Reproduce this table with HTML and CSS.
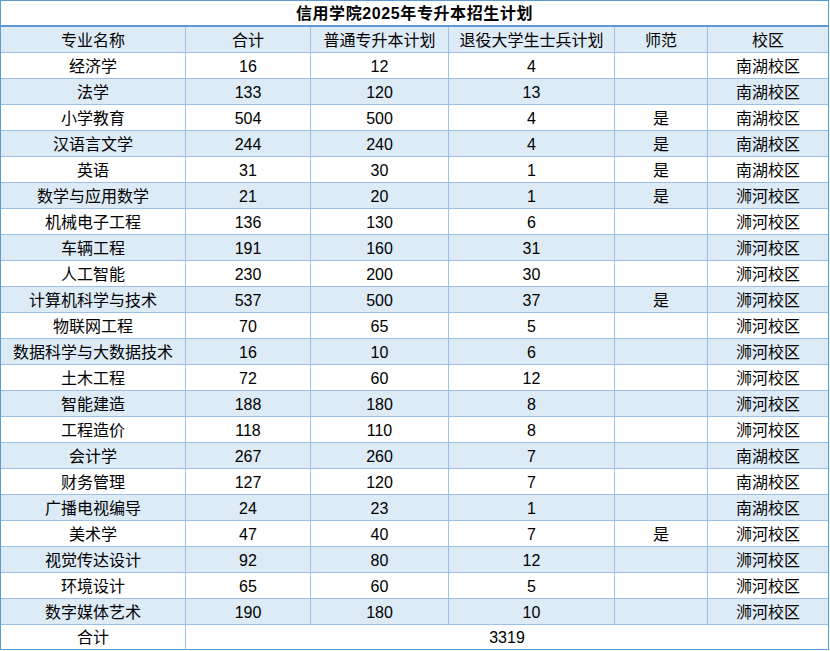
FILE: index.html
```html
<!DOCTYPE html>
<html lang="zh-CN">
<head>
<meta charset="utf-8">
<title>信用学院2025年专升本招生计划</title>
<link rel="stylesheet" href="styles.css">
</head>
<body>
<div class="sheet">
  <div class="title">信用学院2025年专升本招生计划</div>
  <div class="row band"><div class="c">专业名称</div><div class="c">合计</div><div class="c">普通专升本计划</div><div class="c">退役大学生士兵计划</div><div class="c">师范</div><div class="c">校区</div></div>
  <div class="row"><div class="c">经济学</div><div class="c">16</div><div class="c">12</div><div class="c">4</div><div class="c"></div><div class="c">南湖校区</div></div>
  <div class="row band"><div class="c">法学</div><div class="c">133</div><div class="c">120</div><div class="c">13</div><div class="c"></div><div class="c">南湖校区</div></div>
  <div class="row"><div class="c">小学教育</div><div class="c">504</div><div class="c">500</div><div class="c">4</div><div class="c">是</div><div class="c">南湖校区</div></div>
  <div class="row band"><div class="c">汉语言文学</div><div class="c">244</div><div class="c">240</div><div class="c">4</div><div class="c">是</div><div class="c">南湖校区</div></div>
  <div class="row"><div class="c">英语</div><div class="c">31</div><div class="c">30</div><div class="c">1</div><div class="c">是</div><div class="c">南湖校区</div></div>
  <div class="row band"><div class="c">数学与应用数学</div><div class="c">21</div><div class="c">20</div><div class="c">1</div><div class="c">是</div><div class="c">浉河校区</div></div>
  <div class="row"><div class="c">机械电子工程</div><div class="c">136</div><div class="c">130</div><div class="c">6</div><div class="c"></div><div class="c">浉河校区</div></div>
  <div class="row band"><div class="c">车辆工程</div><div class="c">191</div><div class="c">160</div><div class="c">31</div><div class="c"></div><div class="c">浉河校区</div></div>
  <div class="row"><div class="c">人工智能</div><div class="c">230</div><div class="c">200</div><div class="c">30</div><div class="c"></div><div class="c">浉河校区</div></div>
  <div class="row band"><div class="c">计算机科学与技术</div><div class="c">537</div><div class="c">500</div><div class="c">37</div><div class="c">是</div><div class="c">浉河校区</div></div>
  <div class="row"><div class="c">物联网工程</div><div class="c">70</div><div class="c">65</div><div class="c">5</div><div class="c"></div><div class="c">浉河校区</div></div>
  <div class="row band"><div class="c">数据科学与大数据技术</div><div class="c">16</div><div class="c">10</div><div class="c">6</div><div class="c"></div><div class="c">浉河校区</div></div>
  <div class="row"><div class="c">土木工程</div><div class="c">72</div><div class="c">60</div><div class="c">12</div><div class="c"></div><div class="c">浉河校区</div></div>
  <div class="row band"><div class="c">智能建造</div><div class="c">188</div><div class="c">180</div><div class="c">8</div><div class="c"></div><div class="c">浉河校区</div></div>
  <div class="row"><div class="c">工程造价</div><div class="c">118</div><div class="c">110</div><div class="c">8</div><div class="c"></div><div class="c">浉河校区</div></div>
  <div class="row band"><div class="c">会计学</div><div class="c">267</div><div class="c">260</div><div class="c">7</div><div class="c"></div><div class="c">南湖校区</div></div>
  <div class="row"><div class="c">财务管理</div><div class="c">127</div><div class="c">120</div><div class="c">7</div><div class="c"></div><div class="c">南湖校区</div></div>
  <div class="row band"><div class="c">广播电视编导</div><div class="c">24</div><div class="c">23</div><div class="c">1</div><div class="c"></div><div class="c">南湖校区</div></div>
  <div class="row"><div class="c">美术学</div><div class="c">47</div><div class="c">40</div><div class="c">7</div><div class="c">是</div><div class="c">浉河校区</div></div>
  <div class="row band"><div class="c">视觉传达设计</div><div class="c">92</div><div class="c">80</div><div class="c">12</div><div class="c"></div><div class="c">浉河校区</div></div>
  <div class="row"><div class="c">环境设计</div><div class="c">65</div><div class="c">60</div><div class="c">5</div><div class="c"></div><div class="c">浉河校区</div></div>
  <div class="row band"><div class="c">数字媒体艺术</div><div class="c">190</div><div class="c">180</div><div class="c">10</div><div class="c"></div><div class="c">浉河校区</div></div>
  <div class="row total"><div class="c">合计</div><div class="c span">3319</div></div>
</div>
</body>
</html>
```
FILE: styles.css
```css
html, body {
  margin: 0;
  padding: 0;
  background: #ffffff;
}

body {
  font-family: "Liberation Sans", "Noto Sans CJK SC", sans-serif;
  font-size: 16px;
  color: #000000;
}

.sheet {
  box-sizing: border-box;
  width: 829px;
  border: 1px solid #5b9bd5;
  background: #ffffff;
}

.title {
  box-sizing: border-box;
  height: 26px;
  border-bottom: 2px solid #5b9bd5;
  display: flex;
  align-items: center;
  justify-content: center;
  padding-top: 1px;
  font-weight: bold;
  letter-spacing: 0.6px;
  line-height: 1;
}

.row {
  box-sizing: border-box;
  display: grid;
  grid-template-columns: 185px 125px 138px 166px 93px 120px;
  height: 26px;
  border-bottom: 1px solid #9bc2e6;
}

.band {
  background: #ddebf7;
}

.c {
  box-sizing: border-box;
  border-right: 1px solid #9bc2e6;
  display: flex;
  align-items: center;
  justify-content: center;
  padding-top: 2px;
  line-height: 1;
  white-space: nowrap;
}

.c:last-child {
  border-right: none;
}

.total {
  height: 24px;
  border-bottom: none;
}

.total .span {
  grid-column: 2 / -1;
}
```
